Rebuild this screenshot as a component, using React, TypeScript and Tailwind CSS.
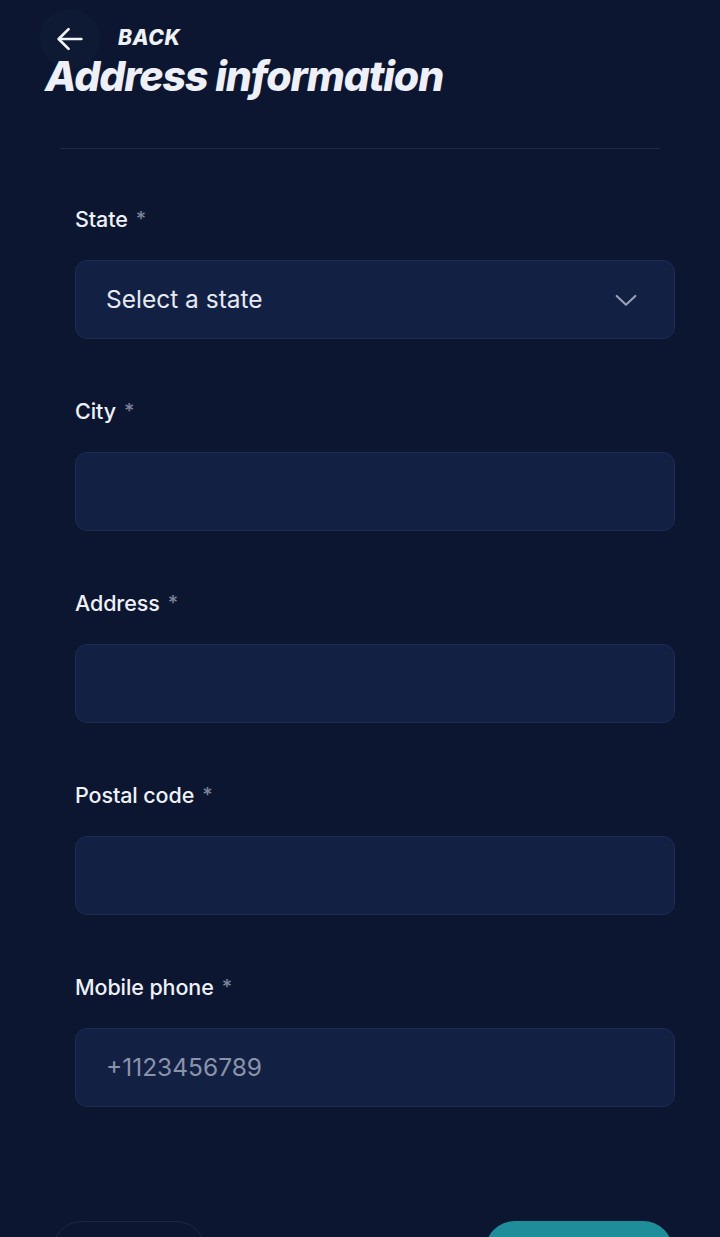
import React from "react";

function Field({ label, placeholder, select }: { label: string; placeholder?: string; select?: boolean }) {
  return (
    <div className="flex flex-col">
      <div className="h-[40px] flex items-center text-[21.5px] text-[#eef1f8] font-medium tracking-[-0.1px]">
        {label}
        <span className="ml-[8px] text-[#7d8498] text-[20px]">*</span>
      </div>
      <div className="mt-[21px] h-[79px] rounded-[12px] bg-[#122044] border border-[#1f2c52] flex items-center pl-[30px] pr-[34px] justify-between">
        <span className={select ? "text-[24.5px] text-[#e6e9f2]" : "text-[24.5px] text-[#8b93a8]"}>{placeholder ?? ""}</span>
        {select && (
          <svg width="28" height="28" viewBox="0 0 24 24" fill="none" stroke="#9aa1b3" strokeWidth="1.8" strokeLinecap="round" strokeLinejoin="round">
            <path d="M4 8.5l8 7.5 8-7.5" />
          </svg>
        )}
      </div>
    </div>
  );
}

export default function App() {
  return (
    <div className="w-[720px] h-[1237px] bg-[#0c1630] overflow-hidden relative" style={{ fontFamily: "Inter, 'Noto Sans', sans-serif" }}>
      <div className="pt-[9px] pl-[40px] flex items-center">
        <div className="w-[60px] h-[60px] rounded-full bg-[#0e1933] flex items-center justify-center">
          <svg width="34" height="34" viewBox="0 0 24 24" fill="none" stroke="#f2f4fa" strokeWidth="1.9" strokeLinecap="round" strokeLinejoin="round">
            <path d="M20 12H5" />
            <path d="M11 5l-7 7 7 7" />
          </svg>
        </div>
        <span className="ml-[18px] -mt-[2px] text-[21px] leading-[22px] font-extrabold italic text-[#eef1f8] tracking-[0.6px]">BACK</span>
      </div>
      <h1 className="-mt-[11px] ml-[45px] text-[41px] leading-[36px] font-extrabold italic text-[#edf0f8] tracking-[-1.1px]">
        Address information
      </h1>
      <div className="mx-[60px] mt-[54px] h-px bg-[#1f2a47]" />
      <div className="ml-[75px] mr-[45px] mt-[50px] flex flex-col gap-[52px]">
        <Field label="State" placeholder="Select a state" select />
        <Field label="City" />
        <Field label="Address" />
        <Field label="Postal code" />
        <Field label="Mobile phone" placeholder="+1123456789" />
      </div>
      <div className="absolute top-[1221px] left-[52px] w-[154px] h-[60px] rounded-full border border-[#1c2846] bg-[#0c1630]" />
      <div className="absolute top-[1221px] left-[485px] w-[188px] h-[60px] rounded-full bg-[#1e8f9a]" />
    </div>
  );
}
